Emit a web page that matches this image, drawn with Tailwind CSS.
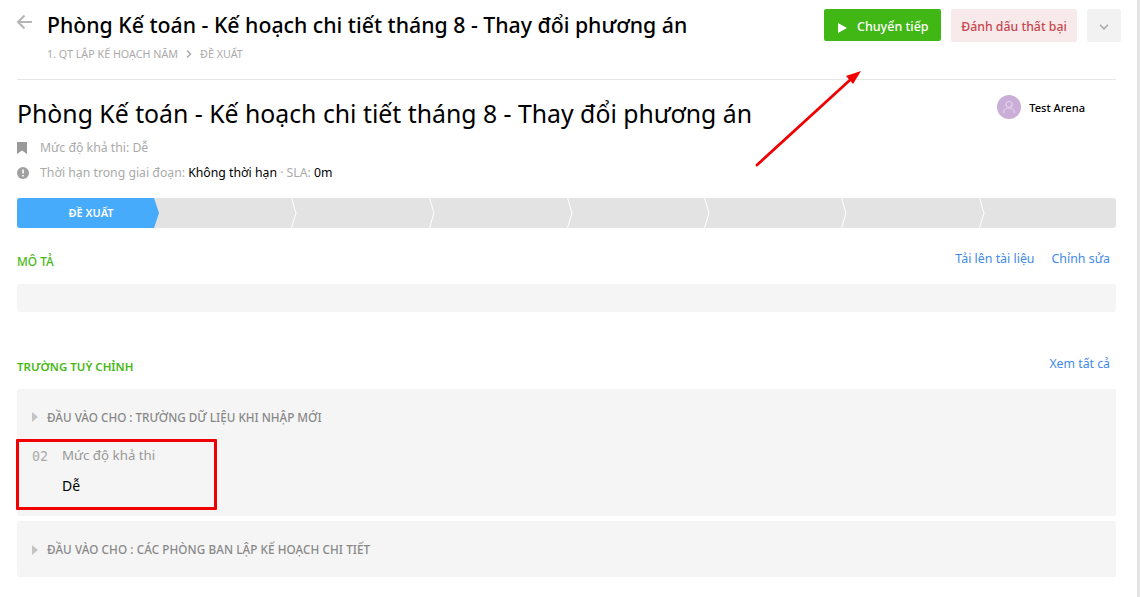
<!DOCTYPE html>
<html lang="en">
<head>
  <meta charset="UTF-8">
  <title>Phòng Kế toán</title>
  <script src="https://cdn.jsdelivr.net/npm/@tailwindcss/browser@4"></script>
</head>
<body class="bg-white font-['Noto_Sans','Open_Sans',sans-serif] overflow-hidden">
  <div class="relative h-[597px] w-[1140px] border-r-[3px] border-[#e4e4e4] pl-[17px] pr-[21px]">

    <!-- Header -->
    <header class="flex h-[80px] items-start border-b border-[#e6e6e6]">
      <svg class="ml-[-1px] mt-[14px] h-[16px] w-[16px] shrink-0 text-[#b5b5b5]" viewBox="0 0 16 16" fill="none" stroke="currentColor" stroke-width="2">
        <path d="M16 8H2M8.500 1.500 2 8l6.500 6.500"/>
      </svg>
      <div class="ml-[15px] flex-1">
        <h1 class="mt-[9px] text-[21.250px] leading-[32px] font-medium text-black">Phòng Kế toán - Kế hoạch chi tiết tháng 8 - Thay đổi phương án</h1>
        <div class="mt-[5px] flex items-center text-[10.750px] leading-[16px] text-[#aaaaaa]">
          <span>1. QT LẬP KẾ HOẠCH NĂM</span>
          <svg class="mx-[8px] h-[8px] w-[6px]" viewBox="0 0 6 8" fill="none" stroke="currentColor" stroke-width="1.500"><path d="M1 .5 4.500 4 1 7.500"/></svg>
          <span>ĐỀ XUẤT</span>
        </div>
      </div>
      <div class="mt-[9px] mr-[-5px] flex items-start">
        <button class="flex h-[32px] w-[117px] items-center rounded-[2px] bg-[#41b715] pl-[14px] pt-[5px] text-[12.500px] font-medium text-white">
          <svg class="mr-[10px] h-[10px] w-[9px]" viewBox="0 0 9 10" fill="currentColor"><path d="M0 0l9 5-9 5z"/></svg>
          Chuyển tiếp
        </button>
        <button class="ml-[10px] h-[33px] w-[126px] rounded-[2px] bg-[#f8eaea] pt-[4px] text-[12.300px] font-medium text-[#c8474f]">Đánh dấu thất bại</button>
        <button class="ml-[10px] flex h-[33px] w-[34px] items-center justify-center rounded-[2px] bg-[#f2f2f2] pt-[2px] text-[#aaaaaa]">
          <svg class="h-[6px] w-[10px]" viewBox="0 0 10 6" fill="none" stroke="currentColor" stroke-width="1.600"><path d="M1 .8 5 4.800 9 .8"/></svg>
        </button>
      </div>
    </header>

    <!-- Title + assignee -->
    <div class="flex items-start justify-between">
      <h2 class="mt-[14px] text-[24.800px] leading-[38px] text-black">Phòng Kế toán - Kế hoạch chi tiết tháng 8 - Thay đổi phương án</h2>
      <div class="mt-[15px] mr-[31px] flex items-center">
        <div class="flex h-[24px] w-[24px] items-center justify-center rounded-full bg-[#cbaed8]">
          <svg class="h-[14px] w-[14px] text-[#e3d3ea]" viewBox="0 0 14 14" fill="none" stroke="currentColor" stroke-width="1.200"><circle cx="7" cy="4.500" r="3"/><path d="M1.500 13c0-3 2.500-5 5.500-5s5.500 2 5.500 5"/></svg>
        </div>
        <span class="ml-[8px] pt-[2px] text-[11.100px] font-medium text-black">Test Arena</span>
      </div>
    </div>

    <div class="mt-[6px] flex items-center text-[12.250px] leading-[20px] text-[#aaaaaa]">
      <svg class="h-[12px] w-[10px]" viewBox="0 0 10 12" fill="#999999"><path d="M0 0h10v12L5 8.500 0 12z"/></svg>
      <span class="ml-[13px]">Mức độ khả thi: Dễ</span>
    </div>
    <div class="mt-[5px] flex items-center text-[12.250px] leading-[20px] text-[#aaaaaa]">
      <svg class="h-[12px] w-[12px]" viewBox="0 0 12 12"><circle cx="6" cy="6" r="6" fill="#a0a0a0"/><path d="M6 2.500v4M6 8v1.500" stroke="#fff" stroke-width="1.600"/></svg>
      <span class="ml-[11px]">Thời hạn trong giai đoạn: <span class="text-black">Không thời hạn</span> · SLA: <span class="text-black">0m</span></span>
    </div>

    <!-- Stepper -->
    <div class="mt-[15px] flex h-[30px] overflow-hidden rounded-[3px] bg-[#e3e3e3]">
      <div class="relative h-full w-[142px] shrink-0 bg-[#46abfa] [clip-path:polygon(0_0,137px_0,142px_50%,137px_100%,0_100%)]">
        <div class="pl-[6px] text-center text-[11px] leading-[30px] font-semibold text-white">ĐỀ XUẤT</div>
      </div>
      <div class="ml-[-5px] flex flex-1">
        <div class="flex w-[143px] justify-end"><svg class="h-[30px] w-[6px]" viewBox="0 0 6 30" fill="none" stroke="#fff"><path d="M.5 0 5 15 .5 30"/></svg></div>
        <div class="flex w-[138px] justify-end"><svg class="h-[30px] w-[6px]" viewBox="0 0 6 30" fill="none" stroke="#fff"><path d="M.5 0 5 15 .5 30"/></svg></div>
        <div class="flex w-[138px] justify-end"><svg class="h-[30px] w-[6px]" viewBox="0 0 6 30" fill="none" stroke="#fff"><path d="M.5 0 5 15 .5 30"/></svg></div>
        <div class="flex w-[137px] justify-end"><svg class="h-[30px] w-[6px]" viewBox="0 0 6 30" fill="none" stroke="#fff"><path d="M.5 0 5 15 .5 30"/></svg></div>
        <div class="flex w-[137px] justify-end"><svg class="h-[30px] w-[6px]" viewBox="0 0 6 30" fill="none" stroke="#fff"><path d="M.5 0 5 15 .5 30"/></svg></div>
        <div class="flex w-[138px] justify-end"><svg class="h-[30px] w-[6px]" viewBox="0 0 6 30" fill="none" stroke="#fff"><path d="M.5 0 5 15 .5 30"/></svg></div>
      </div>
    </div>

    <!-- Description -->
    <div class="mt-[20px] flex h-[20px] items-center justify-between pr-[6px]">
      <h3 class="mt-[8px] text-[11.800px] font-medium text-[#46b814]">MÔ TẢ</h3>
      <div class="mt-[2px] flex gap-[17px] text-[12.400px] text-[#3f8ae8]">
        <a>Tải lên tài liệu</a>
        <a>Chỉnh sửa</a>
      </div>
    </div>
    <div class="mt-[16px] h-[28px] rounded-[3px] bg-[#f5f5f5]"></div>

    <!-- Custom fields -->
    <div class="mt-[41px] flex h-[20px] items-center justify-between pr-[6px]">
      <h3 class="mt-[8px] text-[11.500px] font-semibold text-[#46b814]">TRƯỜNG TUỲ CHỈNH</h3>
      <a class="mt-[2px] text-[12.300px] text-[#3f8ae8]">Xem tất cả</a>
    </div>
    <div class="mt-[16px] h-[127px] rounded-[3px] bg-[#f5f5f5] pl-[15px]">
      <div class="flex items-center pt-[18px] text-[11.700px] leading-[20px] font-medium text-[#888888]">
        <svg class="h-[10px] w-[6px] fill-[#c4c4c4]" viewBox="0 0 6 10"><path d="M0 0l6 5-6 5z"/></svg>
        <span class="ml-[9px]">ĐẦU VÀO CHO : TRƯỜNG DỮ LIỆU KHI NHẬP MỚI</span>
      </div>
      <div class="mt-[18px] flex">
        <span class="mt-[2px] w-[30px] font-['DejaVu_Sans_Mono',monospace] text-[13.300px] leading-[20px] text-[#aaaaaa]">02</span>
        <div>
          <div class="text-[13.300px] leading-[20px] text-[#999999]">Mức độ khả thi</div>
          <div class="mt-[11px] text-[14px] leading-[20px] text-black">Dễ</div>
        </div>
      </div>
    </div>
    <div class="mt-[5px] flex h-[56px] items-center rounded-[3px] bg-[#f5f5f5] pl-[15px] pt-[2px] text-[11.700px] font-medium text-[#888888]">
      <svg class="h-[10px] w-[6px] fill-[#c4c4c4]" viewBox="0 0 6 10"><path d="M0 0l6 5-6 5z"/></svg>
      <span class="ml-[9px] tracking-[0.08px]">ĐẦU VÀO CHO : CÁC PHÒNG BAN LẬP KẾ HOẠCH CHI TIẾT</span>
    </div>

    <!-- Annotations drawn over the page -->
    <div class="absolute left-[16px] top-[439px] h-[71px] w-[201px] rounded-[1px] border-[3px] border-[#f00000]"></div>
    <svg class="absolute left-[750px] top-[65px] h-[105px] w-[120px]" viewBox="0 0 120 105">
      <path d="M7 100 100 15" stroke="#f00000" stroke-width="2.800" stroke-linecap="round"/>
      <path d="M111 6 103 19 96 11z" fill="#f00000"/>
    </svg>
  </div>
</body>
</html>
